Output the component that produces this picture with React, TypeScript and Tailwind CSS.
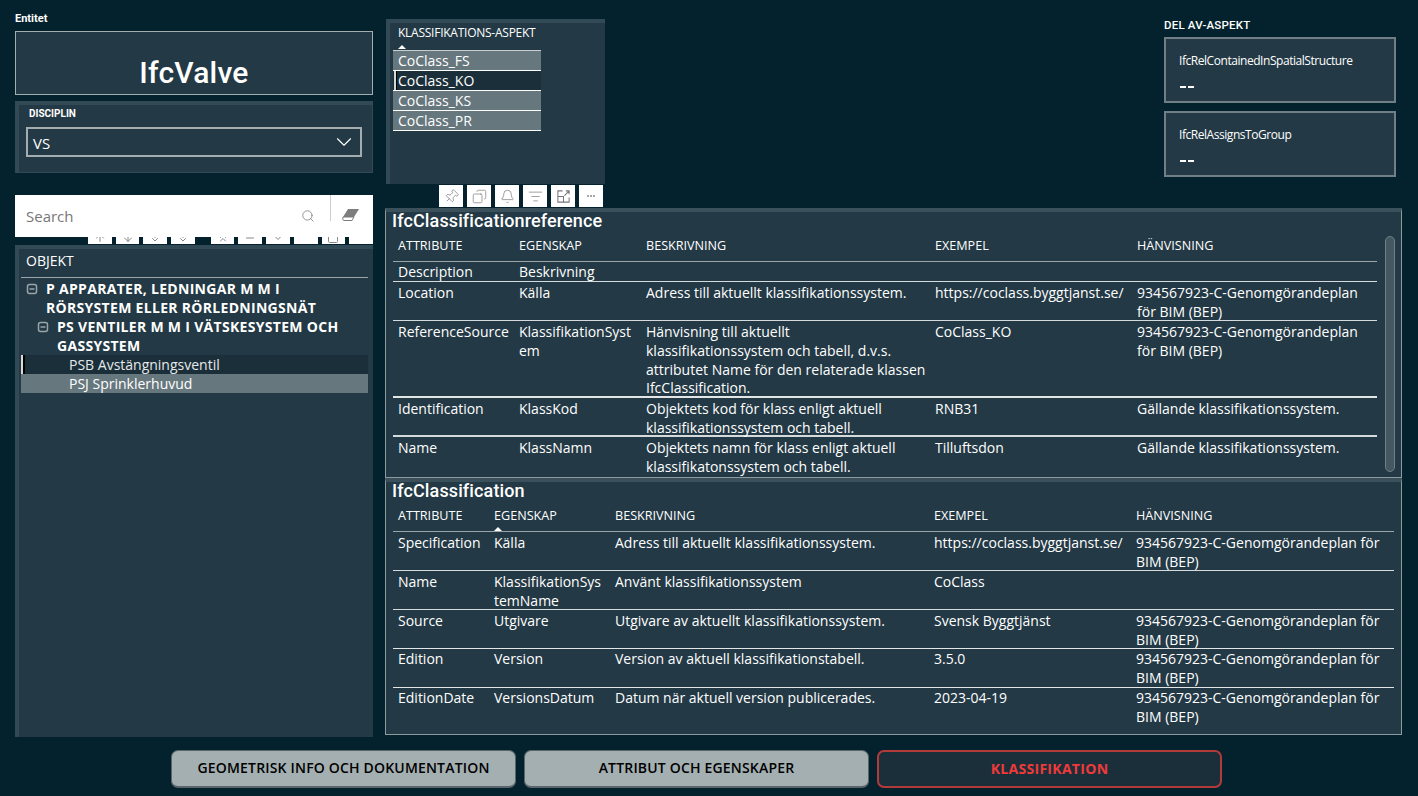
import React from "react";
import { Pin, Copy, Bell, ListFilter, Search, ChevronDown, ArrowUp, ArrowDown, ChevronsDown, ChevronsUp, Minus, ChevronUp, Square } from "lucide-react";

const seg = "font-['Open_Sans','Noto_Sans',sans-serif]";
const din = "font-['Roboto','Liberation_Sans',sans-serif]";

type Row = { h: string; line: string; cells: string[]; tight?: boolean };

function ExpandIcon() {
  return (
    <svg width="12" height="12" viewBox="0 0 12 12" fill="none" stroke="#9aa5aa" strokeWidth="1.5" className="shrink-0 mt-[4px]">
      <rect x="1.5" y="1.5" width="9" height="9" rx="2" />
      <path d="M3.5 6h5" />
    </svg>
  );
}

function FocusIcon() {
  return (
    <svg width="15" height="15" viewBox="0 0 16 16" fill="none" stroke="#777" strokeWidth="1.1">
      <path d="M7 2H2v12h12V9" />
      <path d="M2 8h6v6" />
      <path d="M9 7l5-5M10.5 2H14v3.5" />
    </svg>
  );
}

function Table({ title, cols, widths, rows, sortIdx, height }: { title: string; cols: string[]; widths: number[]; rows: Row[]; sortIdx: number; height: string }) {
  return (
    <div className={`${height} border border-[#8d9b9f] border-t-[4px] border-t-[#3a515c] bg-[#233945] pl-[7px] overflow-hidden`}>
      <div className={`${din} h-[23px] -ml-px -mt-px text-[18px] leading-[20px] font-medium text-white tracking-[0.12px]`}>{title}</div>
      <div className="flex flex-col w-fit mt-px">
        <div className={`flex h-[27px] border-b border-[#9aa5a9] ${seg} text-[12.6px] text-white`}>
          {cols.map((c, i) => (
            <div key={c} style={{ width: widths[i] }} className="relative px-[5px] pt-[3px] leading-[16px]">
              {c}
              {i === sortIdx && <span className="absolute left-[5px] bottom-[0px] w-0 h-0 border-x-[4px] border-x-transparent border-b-[4px] border-b-white" />}
            </div>
          ))}
        </div>
        {rows.map((r, i) => (
          <div key={i} className={`flex ${r.h} ${r.line} ${seg} text-[14px] leading-[18.8px] text-white`}>
            {r.cells.map((c, j) => (
              <div key={j} style={{ width: widths[j] }} className={`pl-[5px] [overflow-wrap:anywhere] ${r.tight ? "pt-px" : "pt-[2px]"} ${j === 2 ? "pr-0" : "pr-[5px]"}`}>
                {c}
              </div>
            ))}
          </div>
        ))}
      </div>
    </div>
  );
}

const BEP = "934567923-C-Genomgörandeplan för BIM (BEP)";
const rows1: Row[] = [
  { h: "h-[20px]", line: "border-b border-[#d5dadc]", tight: true, cells: ["Description", "Beskrivning", "", "", ""] },
  { h: "h-[39px]", line: "border-b border-[#d5dadc]", cells: ["Location", "Källa", "Adress till aktuellt klassifikationssystem.", "https://coclass.byggtjanst.se/", BEP] },
  { h: "h-[77px]", line: "border-b-2 border-[#e3e6e7]", cells: ["ReferenceSource", "KlassifikationSystem", "Hänvisning till aktuellt klassifikationssystem och tabell, d.v.s. attributet Name för den relaterade klassen IfcClassification.", "CoClass_KO", BEP] },
  { h: "h-[39px]", line: "border-b-2 border-[#d5dadc]", cells: ["Identification", "KlassKod", "Objektets kod för klass enligt aktuell klassifikationssystem och tabell.", "RNB31", "Gällande klassifikationssystem."] },
  { h: "h-[39px]", line: "", cells: ["Name", "KlassNamn", "Objektets namn för klass enligt aktuell klassifikatonssystem och tabell.", "Tilluftsdon", "Gällande klassifikationssystem."] },
];
const rows2: Row[] = [
  { h: "h-[39px]", line: "border-b border-[#d5dadc]", cells: ["Specification", "Källa", "Adress till aktuellt klassifikationssystem.", "https://coclass.byggtjanst.se/", BEP] },
  { h: "h-[39px]", line: "border-b border-[#d5dadc]", cells: ["Name", "KlassifikationSystemName", "Använt klassifikationssystem", "CoClass", ""] },
  { h: "h-[39px]", line: "border-b border-[#e3e6e7]", cells: ["Source", "Utgivare", "Utgivare av aktuellt klassifikationssystem.", "Svensk Byggtjänst", BEP] },
  { h: "h-[39px]", line: "border-b border-[#e3e6e7]", tight: true, cells: ["Edition", "Version", "Version av aktuell klassifikationstabell.", "3.5.0", BEP] },
  { h: "h-[39px]", line: "", tight: true, cells: ["EditionDate", "VersionsDatum", "Datum när aktuell version publicerades.", "2023-04-19", BEP] },
];

function Tab({ children }: { children?: React.ReactNode }) {
  return <div className="w-[24px] h-[7px] bg-white overflow-hidden flex justify-center items-end text-[#888]">{children}</div>;
}
function Clip({ children }: { children: React.ReactNode }) {
  return <div className="h-[7px] flex items-end">{children}</div>;
}

function ToolBtn({ children }: { children: React.ReactNode }) {
  return <div className="w-[24px] h-[22px] bg-white flex items-center justify-center text-[#777]">{children}</div>;
}

function AspectRow({ label, active }: { label: string; active?: boolean }) {
  return (
    <div className={`relative h-[20px] pl-[5px] text-[14px] leading-[20px] text-white ${active ? "bg-[#1b2f3a]" : "bg-[#66777e]"} border-b border-white`}>
      {active && <span className="absolute left-[1px] top-0 w-[3px] h-[19px] border-l-2 border-l-[#d8d8d8] border-r border-r-black" />}
      {label}
    </div>
  );
}

function Card({ label }: { label: string }) {
  return (
    <div className="w-[232px] h-[66px] border-2 border-[#6f7f85] bg-[#233945] pl-[13px] pt-[13px] flex flex-col">
      <div className={`${seg} text-[12px] leading-[18px] text-white tracking-[-0.45px]`}>{label}</div>
      <div className="flex gap-[2px] mt-[16px] ml-[1px]">
        <span className="w-[6px] h-[2px] bg-white" />
        <span className="w-[6px] h-[2px] bg-white" />
      </div>
    </div>
  );
}

function NavButton({ label, active }: { label: string; active?: boolean }) {
  return active ? (
    <div className={`w-[345px] h-[38px] pb-[2px] rounded-[7px] border-2 border-[#b23a38] bg-[#1b2f3a] flex items-center justify-center ${seg} text-[14px] font-bold tracking-[0.3px] text-[#f03a3a]`}>{label}</div>
  ) : (
    <div className={`w-[345px] h-[38px] pb-[2px] rounded-[7px] border border-[#58666b] border-b-2 bg-[#a4afb1] flex items-center justify-center ${seg} text-[14px] font-semibold tracking-[0.18px] text-black`}>{label}</div>
  );
}

export default function App() {
  return (
    <div className="w-[1418px] h-[796px] bg-[#04222d] overflow-hidden flex flex-col text-white">
      <div className="flex h-[750px] pl-[15px] gap-[12px]">
        {/* Left column */}
        <div className="w-[358px] flex flex-col">
          <div className={`${din} h-[31px] pt-[12px] text-[11px] leading-[14px] font-bold text-white`}>Entitet</div>
          <div className="h-[64px] border border-[#a3adb0] bg-[#233945] flex items-end justify-center">
            <span className={`${din} mb-[2px] text-[30px] leading-[38px] tracking-[0.2px] text-white font-medium`}>IfcValve</span>
          </div>
          <div className="mt-[6px] h-[72px] border-t-[4px] border-l-[4px] border-r border-b border-[#324a55] bg-[#233945] pl-[7px] pr-[10px]">
            <div className={`${din} text-[10px] leading-[14px] pt-[2px] h-[22px] pl-[3px] font-bold text-white`}>DISCIPLIN</div>
            <div className="h-[30px] border-2 border-[#a3adb0] flex items-center justify-between pl-[5px] pr-[3px]">
              <span className={`${seg} text-[15px] mt-[2px] text-white`}>VS</span>
              <ChevronDown size={26} strokeWidth={1} className="text-white" />
            </div>
          </div>
          <div className="mt-[22px] h-[42px] bg-white flex items-center relative">
            <span className={`${seg} pl-[11px] text-[15px] text-[#777] flex-1`}>Search</span>
            <Search size={14} strokeWidth={1.3} className="text-[#777] mr-[15px]" />
            <div className="w-px h-[26px] bg-[#ccc] self-start mr-[11px]" />
            <svg width="18" height="14" viewBox="0 0 18 14" className="mr-[13px] mb-[3px]">
              <path d="M6 1h11l-5 8H1z" fill="#7d7d7d" />
              <path d="M1 9h11l-2 3.5H1.5L0.7 11z" fill="#fff" stroke="#7d7d7d" strokeWidth="1" />
            </svg>
          </div>
          <div className="flex h-[7px] pl-[73px] gap-[4px]">
            <Tab><Clip><ArrowUp size={12} /></Clip></Tab>
            <Tab><Clip><ArrowDown size={12} /></Clip></Tab>
            <Tab><Clip><ChevronsDown size={12} /></Clip></Tab>
            <Tab><Clip><ChevronsDown size={12} /></Clip></Tab>
            <div className="w-[8px]" />
            <Tab><Clip><ChevronsUp size={12} /></Clip></Tab>
            <Tab><Clip><Minus size={12} /></Clip></Tab>
            <Tab><Clip><ChevronUp size={12} className="rotate-180" /></Clip></Tab>
            <Tab />
            <Tab><Clip><Square size={12} /></Clip></Tab>
            <Tab />
          </div>
          <div className="mt-px h-[492px] border-t-[4px] border-l-[4px] border-[#324a55] bg-[#233945] pl-[2px] pr-[5px]">
            <div className={`${seg} h-[29px] pl-[5px] pt-[2px] text-[14px] leading-[20px] border-b border-[#9aa5a9] text-white`}>OBJEKT</div>
            <div className={`${seg} text-[14px] leading-[19.25px] text-white`}>
              <div className="flex items-start h-[39px] pt-px pl-[5px] gap-[8px]">
                <ExpandIcon />
                <div className="font-bold tracking-[0.3px]">P APPARATER, LEDNINGAR M M I<br />RÖRSYSTEM ELLER RÖRLEDNINGSNÄT</div>
              </div>
              <div className="flex items-start h-[38px] pl-[16px] gap-[8px]">
                <ExpandIcon />
                <div className="font-bold tracking-[0.3px]">PS VENTILER M M I VÄTSKESYSTEM OCH<br />GASSYSTEM</div>
              </div>
              <div className="relative h-[19px] bg-[#1b2f3a] pl-[48px] leading-[19px] text-[#e6e9ea]">
                <span className="absolute left-0 top-0 w-[4px] h-[19px] border-l-2 border-l-[#d8d8d8] border-r-2 border-r-black" />
                PSB Avstängningsventil
              </div>
              <div className="h-[19px] bg-[#66777e] pl-[48px] leading-[19px]">PSJ Sprinklerhuvud</div>
            </div>
          </div>
        </div>

        {/* Right column */}
        <div className="w-[1017px] relative flex flex-col">
          <div className="h-[208px] flex justify-between pr-[6px]">
            <div className="w-[219px] ml-px pt-[19px] flex flex-col">
              <div className="h-[165px] border-t-[4px] border-l-[4px] border-[#324a55] bg-[#233945] pl-[3px]">
                <div className={`${seg} relative h-[27px] pl-[5px] pt-[1px] text-[12px] leading-[18px] text-white tracking-[-0.25px]`}>
                  KLASSIFIKATIONS-ASPEKT
                  <span className="absolute left-[5px] bottom-[1px] w-0 h-0 border-x-[4px] border-x-transparent border-b-[4px] border-b-white" />
                </div>
                <div className={`${seg} w-[148px] border-t border-[#c8ced0]`}>
                  <AspectRow label="CoClass_FS" />
                  <AspectRow label="CoClass_KO" active />
                  <AspectRow label="CoClass_KS" />
                  <AspectRow label="CoClass_PR" />
                </div>
              </div>
              <div className="flex gap-[4px] justify-end pr-[2px] mt-[1px]">
                <ToolBtn><Pin size={15} strokeWidth={1.1} className="rotate-45" /></ToolBtn>
                <ToolBtn><Copy size={15} strokeWidth={1.1} className="-scale-x-100" /></ToolBtn>
                <ToolBtn><Bell size={15} strokeWidth={1.1} /></ToolBtn>
                <ToolBtn><ListFilter size={15} strokeWidth={1.1} /></ToolBtn>
                <ToolBtn><FocusIcon /></ToolBtn>
                <ToolBtn>
                  <div className="flex gap-[1px]">
                    <span className="w-[2px] h-[2px] rounded-full bg-[#888]" />
                    <span className="w-[2px] h-[2px] rounded-full bg-[#888]" />
                    <span className="w-[2px] h-[2px] rounded-full bg-[#888]" />
                  </div>
                </ToolBtn>
              </div>
            </div>
            <div className="w-[232px] flex flex-col">
              <div className={`${din} h-[37px] pt-[18px] text-[11.5px] leading-[15px] font-medium text-white tracking-[0.2px]`}>DEL AV-ASPEKT</div>
              <Card label="IfcRelContainedInSpatialStructure" />
              <div className="h-[8px]" />
              <Card label="IfcRelAssignsToGroup" />
            </div>
          </div>
          <Table
            title="IfcClassificationreference"
            cols={["ATTRIBUTE", "EGENSKAP", "BESKRIVNING", "EXEMPEL", "HÄNVISNING"]}
            widths={[121, 127, 289, 202, 245]}
            rows={rows1}
            sortIdx={-1}
            height="h-[270px]"
          />
          <Table
            title="IfcClassification"
            cols={["ATTRIBUTE", "EGENSKAP", "BESKRIVNING", "EXEMPEL", "HÄNVISNING"]}
            widths={[96, 121, 319, 202, 263]}
            rows={rows2}
            sortIdx={1}
            height="h-[257px]"
          />
          <div className="absolute left-[1000px] top-[236px] w-[10px] h-[236px] rounded-[5px] border border-[#6f7f85] bg-[#445862]" />
        </div>
      </div>
      <div className="flex pl-[171px] gap-[8px]">
        <NavButton label="GEOMETRISK INFO OCH DOKUMENTATION" />
        <NavButton label="ATTRIBUT OCH EGENSKAPER" />
        <NavButton label="KLASSIFIKATION" active />
      </div>
    </div>
  );
}
